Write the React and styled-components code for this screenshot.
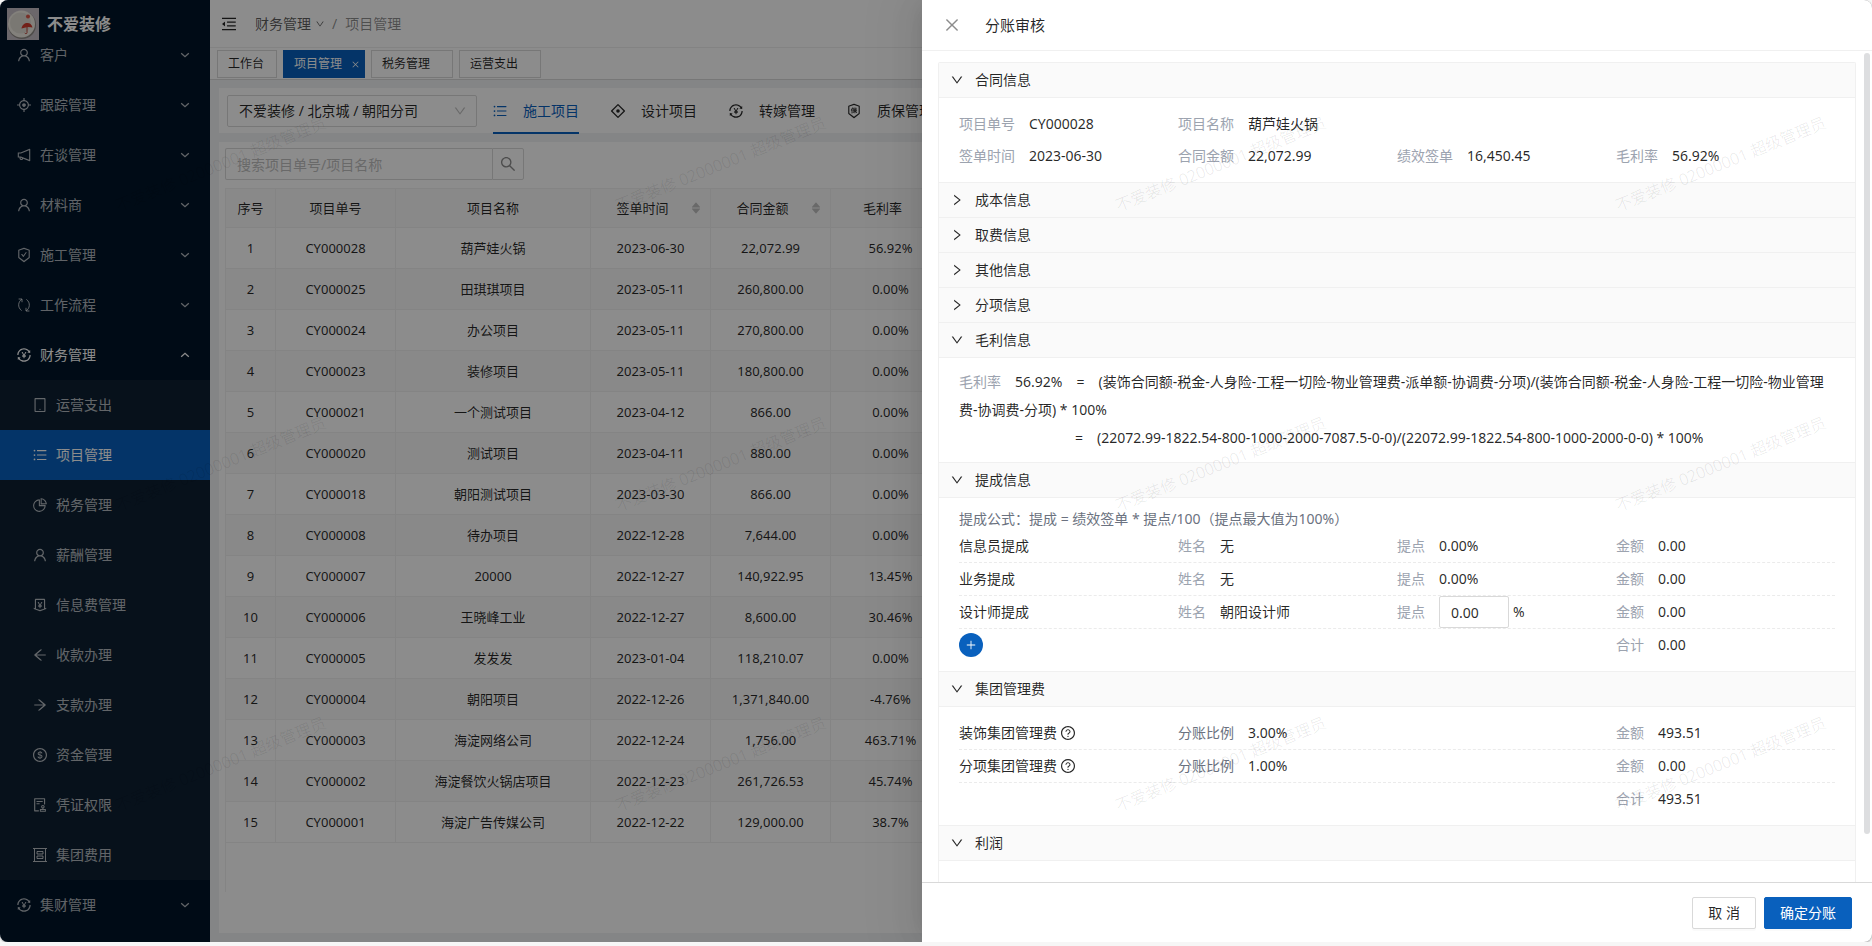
import React, { useState } from "react";
import styled, { createGlobalStyle, css } from "styled-components";
import {
  AiOutlineUser,
  AiOutlineAim,
  AiOutlineNotification,
  AiOutlineSafetyCertificate,
  AiOutlineTransaction,
  AiOutlineTablet,
  AiOutlineUnorderedList,
  AiOutlinePieChart,
  AiOutlineMoneyCollect,
  AiOutlineArrowLeft,
  AiOutlineArrowRight,
  AiOutlineDollar,
  AiOutlineAudit,
  AiOutlineInsurance,
  AiOutlineMenuFold,
  AiOutlineDown,
  AiOutlineRight,
  AiOutlineSearch,
  AiOutlineClose,
  AiOutlinePlus,
  AiOutlineQuestionCircle,
  AiFillCaretUp,
  AiFillCaretDown,
} from "react-icons/ai";

const primary = "#0960bd";
const line = "#f0f0f0";
const controlLine = "#d9d9d9";
const ink = "rgba(0, 0, 0, 0.85)";
const gray = "#9ca3af";
const grayDark = "#6b7280";

const GlobalStyle = createGlobalStyle`
  * { box-sizing: border-box; }
  body {
    margin: 0;
    background: #f6f6f6;
    color: ${ink};
    font-family: "Noto Sans", "Noto Sans CJK SC", sans-serif;
    font-size: 14px;
    line-height: 22px;
  }
  button, input, select { font: inherit; color: inherit; }
  button { padding: 0; border: 0; background: none; cursor: pointer; }
  a { color: inherit; text-decoration: none; }
  svg { display: block; flex: none; }
`;

/* The icon set keeps an empty rim inside its view box; the drawing is
   enlarged past its slot by that rim so the strokes fill the slot. */
const IconSlot = styled.span`
  flex: none;
  display: grid;
  place-items: center;
  place-content: center;
  width: ${(p) => p.$size}px;
  height: ${(p) => p.$size}px;
`;

function Icon({ of: Drawing, size = 14 }) {
  return (
    <IconSlot $size={size}>
      <Drawing size={size > 9 ? size + 2 : size + 1} />
    </IconSlot>
  );
}

const Window = styled.div`
  position: relative;
  display: flex;
  height: calc(100vh - 4px);
  border-radius: 8px;
  overflow: hidden;
  background: #f0f2f5;
  box-shadow: 0 1px 2px rgba(0, 0, 0, 0.3);
`;

/* ---------- sidebar ---------- */

const Sider = styled.aside`
  flex: none;
  display: flex;
  flex-direction: column;
  width: 210px;
  background: #001529;
  color: rgba(255, 255, 255, 0.7);
`;

const Brand = styled.a`
  flex: none;
  display: flex;
  align-items: center;
  gap: 8px;
  height: 48px;
  padding-left: 7px;
  color: #fff;
  font-size: 16px;
  font-weight: 700;
`;

const MenuViewport = styled.nav`
  flex: 1;
  min-height: 0;
  overflow: hidden;
`;

const Menu = styled.ul`
  margin: 0;
  margin-top: ${(p) => (p.$scrolled ? "-18px" : "0")};
  padding: 0;
  list-style: none;
  background: ${(p) => (p.$sub ? "#0e2032" : "transparent")};
`;

const MenuLink = styled.a`
  display: flex;
  align-items: center;
  gap: 9px;
  height: 50px;
  padding: 0 20px 0 ${(p) => (p.$sub ? "33px" : "17px")};
  line-height: 14px;
  ${(p) => p.$open && css`color: #fff;`}
  ${(p) =>
    p.$active &&
    css`
      color: #fff;
      background: ${primary};
    `}
`;

const MenuText = styled.span`
  flex: 1;
`;

function Chevron({ up }) {
  return (
    <svg width="10" height="10" viewBox="0 0 10 10" fill="none" stroke="currentColor" strokeWidth="1.3">
      <path d={up ? "M1.200 6.800L5 3.300l3.800 3.500" : "M1.200 3.200L5 6.700l3.800-3.500"} />
    </svg>
  );
}

function FlowIcon({ size }) {
  return (
    <svg width={size} height={size} viewBox="-1 -1 16 16" fill="none" stroke="currentColor" strokeWidth="1">
      <path d="M4.600 12.600C2.400 11 1.500 8.700 1.700 6.400 1.900 4.300 3 2.400 4.800 1.200M1.600 1h3.400v3.200" />
      <path d="M9.400 1.400c2.200 1.600 3.100 3.900 2.900 6.200-.2 2.100-1.300 4-3.100 5.200M12.400 13H9V9.800" />
    </svg>
  );
}

function CabinetIcon({ size }) {
  return (
    <svg width={size} height={size} viewBox="-1 -1 16 16" fill="none" stroke="currentColor" strokeWidth="1">
      <path d="M1.500 1v12M12.500 1v12M0 .500h14M0 13.500h14" />
      <path d="M4 3.500h6v2.500H4zM4 8h6v2.500H4z" />
    </svg>
  );
}

function DiamondIcon({ size }) {
  return (
    <svg width={size} height={size} viewBox="-1 -1 16 16" fill="none" stroke="currentColor" strokeWidth="1.300">
      <path d="M7 .6L13.400 7 7 13.400 .6 7z" strokeLinejoin="round" />
      <circle cx="7" cy="7" r="1.800" fill="currentColor" stroke="none" />
    </svg>
  );
}

function BrandMark() {
  return (
    <svg width="32" height="32" viewBox="0 0 32 32" aria-hidden="true">
      <rect width="32" height="32" fill="#c3bcc4" />
      <circle cx="15" cy="17" r="14" fill="#8f8a86" />
      <circle cx="14.500" cy="16" r="13.500" fill="#efebe2" />
      <circle cx="13.500" cy="15" r="10.500" fill="#dedad2" />
      <circle cx="21" cy="8.500" r="2" fill="#d9594a" />
      <path d="M14.500 20.500c.5-3.500 3-5.500 6-5.500 2.500 0 4.500 1.800 5 4.500l-3.700-.6-3.300.5z" fill="#d23b2c" />
      <path d="M20 18.500v6.300c0 1.200-2 1.200-2.200 0" fill="none" stroke="#b9483c" strokeWidth="1" />
    </svg>
  );
}

const menuTop = [
  ["客户", AiOutlineUser],
  ["跟踪管理", AiOutlineAim],
  ["在谈管理", AiOutlineNotification],
  ["材料商", AiOutlineUser],
  ["施工管理", AiOutlineSafetyCertificate],
  ["工作流程", FlowIcon],
];

const menuFinance = [
  ["运营支出", AiOutlineTablet],
  ["项目管理", AiOutlineUnorderedList],
  ["税务管理", AiOutlinePieChart],
  ["薪酬管理", AiOutlineUser],
  ["信息费管理", AiOutlineMoneyCollect],
  ["收款办理", AiOutlineArrowLeft],
  ["支款办理", AiOutlineArrowRight],
  ["资金管理", AiOutlineDollar],
  ["凭证权限", AiOutlineAudit],
  ["集团费用", CabinetIcon],
];

function MenuEntry({ label, icon, sub, open, active, children }) {
  return (
    <li>
      <MenuLink href="#" $sub={sub} $open={open} $active={active}>
        <Icon of={icon} />
        <MenuText>{label}</MenuText>
        {!sub && <Chevron up={open} />}
      </MenuLink>
      {children}
    </li>
  );
}

function Sidebar() {
  return (
    <Sider>
      <Brand href="#">
        <BrandMark />
        不爱装修
      </Brand>
      <MenuViewport>
        <Menu $scrolled>
          {menuTop.map(([label, icon]) => (
            <MenuEntry key={label} label={label} icon={icon} />
          ))}
          <MenuEntry label="财务管理" icon={AiOutlineTransaction} open>
            <Menu $sub>
              {menuFinance.map(([label, icon]) => (
                <MenuEntry key={label} label={label} icon={icon} sub active={label === "项目管理"} />
              ))}
            </Menu>
          </MenuEntry>
          <MenuEntry label="集财管理" icon={AiOutlineTransaction} />
        </Menu>
      </MenuViewport>
    </Sider>
  );
}

/* ---------- page ---------- */

const Main = styled.div`
  flex: 1;
  min-width: 0;
  display: flex;
  flex-direction: column;
`;

const TopBar = styled.header`
  flex: none;
  display: flex;
  align-items: center;
  gap: 18px;
  height: 48px;
  padding: 0 11px;
  border-bottom: 1px solid #eee;
  background: #fff;
`;

const Breadcrumb = styled.nav`
  display: flex;
  align-items: center;
  gap: 8px;
  color: rgba(0, 0, 0, 0.45);
`;

const Crumb = styled.a`
  display: flex;
  align-items: center;
  gap: 4px;
  color: ${(p) => (p.$current ? "rgba(0, 0, 0, 0.45)" : "rgba(0, 0, 0, 0.65)")};
`;

const PageTabs = styled.div`
  flex: none;
  display: flex;
  align-items: flex-end;
  gap: 6px;
  height: 32px;
  padding: 0 7px 1px;
  border-bottom: 1px solid ${controlLine};
  background: #fff;
`;

const PageTab = styled.button`
  display: flex;
  align-items: center;
  justify-content: space-between;
  width: ${(p) => (p.$home ? "60px" : "82px")};
  height: 28px;
  padding: 0 5px 0 10px;
  border: 1px solid ${(p) => (p.$active ? primary : controlLine)};
  background: ${(p) => (p.$active ? primary : "#fff")};
  color: ${(p) => (p.$active ? "#fff" : ink)};
  font-size: 12px;
`;

const Content = styled.main`
  flex: 1;
  min-height: 0;
  display: flex;
  flex-direction: column;
  gap: 9px;
  padding: 8px 9px 9px;
`;

const FilterCard = styled.section`
  flex: none;
  display: flex;
  align-items: center;
  gap: 16px;
  height: 45px;
  padding: 0 8px;
  background: #fff;
`;

const SelectBox = styled.label`
  position: relative;
  flex: none;
  width: 250px;
`;

const SelectArrow = styled.span`
  position: absolute;
  right: 11px;
  top: 10px;
  color: rgba(0, 0, 0, 0.25);
  pointer-events: none;
`;

const Select = styled.select`
  display: block;
  width: 100%;
  height: 32px;
  padding: 0 32px 0 11px;
  border: 1px solid ${controlLine};
  border-radius: 2px;
  background: #fff;
  appearance: none;
`;

const KindTabs = styled.div`
  align-self: flex-start;
  display: flex;
  gap: 32px;
`;

const KindTab = styled.button`
  flex: none;
  display: flex;
  align-items: center;
  gap: 16px;
  height: 46px;
  padding-top: 2px;
  border-bottom: 2px solid ${(p) => (p.$active ? primary : "transparent")};
  color: ${(p) => (p.$active ? primary : ink)};
  white-space: nowrap;
`;

const TableCard = styled.section`
  flex: 1;
  min-height: 0;
  padding: 6px 6px 41px;
  display: flex;
  flex-direction: column;
  gap: 8px;
  background: #fff;
`;

const SearchBox = styled.form`
  flex: none;
  display: flex;
`;

const SearchInput = styled.input`
  width: 267px;
  height: 32px;
  padding: 0 11px;
  border: 1px solid ${controlLine};
  border-right: 0;
  border-radius: 2px 0 0 2px;
  background: #fff;
  &::placeholder { color: #bfbfbf; }
`;

const SearchButton = styled.button`
  display: grid;
  place-items: center;
  width: 32px;
  height: 32px;
  border: 1px solid ${controlLine};
  border-radius: 0 2px 2px 0;
  color: rgba(0, 0, 0, 0.45);
`;

const TableFrame = styled.div`
  flex: 1;
  min-height: 0;
  overflow: hidden;
  border-top: 1px solid ${line};
  border-left: 1px solid ${line};
`;

const Table = styled.table`
  width: 725px;
  table-layout: fixed;
  border-collapse: separate;
  border-spacing: 0;
  font-size: 13px;
  text-align: center;

  th, td {
    padding: 0 8px;
    border-right: 1px solid ${line};
    border-bottom: 1px solid ${line};
    font-weight: 400;
    white-space: nowrap;
  }
  th { height: 39px; background: #fafafa; }
  td { height: 41px; }
  tbody tr:nth-child(even) td { background: #fafafa; }
`;

const SortHead = styled.button`
  display: flex;
  align-items: center;
  gap: 4px;
  width: 100%;
`;

const SortLabel = styled.span`
  flex: 1;
`;

const SortArrows = styled.span`
  display: flex;
  flex-direction: column;
  color: #bfbfbf;
  svg + svg { margin-top: -6px; }
`;

const columns = [
  ["序号", 50],
  ["项目单号", 120],
  ["项目名称", 195],
  ["签单时间", 120, true],
  ["合同金额", 120, true],
  ["毛利率", 120, true],
];

const projects = [
  ["CY000028", "葫芦娃火锅", "2023-06-30", "22,072.99", "56.92%"],
  ["CY000025", "田琪琪项目", "2023-05-11", "260,800.00", "0.00%"],
  ["CY000024", "办公项目", "2023-05-11", "270,800.00", "0.00%"],
  ["CY000023", "装修项目", "2023-05-11", "180,800.00", "0.00%"],
  ["CY000021", "一个测试项目", "2023-04-12", "866.00", "0.00%"],
  ["CY000020", "测试项目", "2023-04-11", "880.00", "0.00%"],
  ["CY000018", "朝阳测试项目", "2023-03-30", "866.00", "0.00%"],
  ["CY000008", "待办项目", "2022-12-28", "7,644.00", "0.00%"],
  ["CY000007", "20000", "2022-12-27", "140,922.95", "13.45%"],
  ["CY000006", "王晓峰工业", "2022-12-27", "8,600.00", "30.46%"],
  ["CY000005", "发发发", "2023-01-04", "118,210.07", "0.00%"],
  ["CY000004", "朝阳项目", "2022-12-26", "1,371,840.00", "-4.76%"],
  ["CY000003", "海淀网络公司", "2022-12-24", "1,756.00", "463.71%"],
  ["CY000002", "海淀餐饮火锅店项目", "2022-12-23", "261,726.53", "45.74%"],
  ["CY000001", "海淀广告传媒公司", "2022-12-22", "129,000.00", "38.7%"],
];

function ProjectTable() {
  return (
    <TableFrame>
      <Table>
        <colgroup>
          {columns.map(([name, width]) => (
            <col key={name} width={width} />
          ))}
        </colgroup>
        <thead>
          <tr>
            {columns.map(([name, , sortable]) => (
              <th key={name} scope="col">
                {sortable ? (
                  <SortHead type="button">
                    <SortLabel>{name}</SortLabel>
                    <SortArrows>
                      <AiFillCaretUp size={12} />
                      <AiFillCaretDown size={12} />
                    </SortArrows>
                  </SortHead>
                ) : (
                  name
                )}
              </th>
            ))}
          </tr>
        </thead>
        <tbody>
          {projects.map((row, i) => (
            <tr key={row[0]}>
              <td>{i + 1}</td>
              {row.map((cell, j) => (
                <td key={j}>{cell}</td>
              ))}
            </tr>
          ))}
        </tbody>
      </Table>
    </TableFrame>
  );
}

function ProjectPage() {
  return (
    <Main>
      <TopBar>
        <button type="button" aria-label="收起菜单">
          <Icon of={AiOutlineMenuFold} size={16} />
        </button>
        <Breadcrumb>
          <Crumb href="#">
            财务管理
            <Icon of={AiOutlineDown} size={9} />
          </Crumb>
          /
          <Crumb href="#" $current>
            项目管理
          </Crumb>
        </Breadcrumb>
      </TopBar>
      <PageTabs>
        <PageTab type="button" $home>工作台</PageTab>
        <PageTab type="button" $active>
          项目管理
          <Icon of={AiOutlineClose} size={8} />
        </PageTab>
        <PageTab type="button">税务管理</PageTab>
        <PageTab type="button">运营支出</PageTab>
      </PageTabs>
      <Content>
        <FilterCard>
          <SelectBox>
            <Select aria-label="所属公司">
              <option>不爱装修 / 北京城 / 朝阳分司</option>
            </Select>
            <SelectArrow>
              <Icon of={AiOutlineDown} size={12} />
            </SelectArrow>
          </SelectBox>
          <KindTabs>
            <KindTab type="button" $active>
              <Icon of={AiOutlineUnorderedList} />
              施工项目
            </KindTab>
            <KindTab type="button">
              <Icon of={DiamondIcon} />
              设计项目
            </KindTab>
            <KindTab type="button">
              <Icon of={AiOutlineTransaction} />
              转嫁管理
            </KindTab>
            <KindTab type="button">
              <Icon of={AiOutlineInsurance} />
              质保管理
            </KindTab>
          </KindTabs>
        </FilterCard>
        <TableCard>
          <SearchBox>
            <SearchInput aria-label="搜索项目" placeholder="搜索项目单号/项目名称" />
            <SearchButton type="button" aria-label="搜索">
              <Icon of={AiOutlineSearch} size={16} />
            </SearchButton>
          </SearchBox>
          <ProjectTable />
        </TableCard>
      </Content>
    </Main>
  );
}

/* ---------- drawer ---------- */

const Mask = styled.div`
  position: absolute;
  inset: 0;
  display: flex;
  justify-content: flex-end;
  background: rgba(0, 0, 0, 0.45);
`;

const DrawerPanel = styled.section`
  display: flex;
  flex-direction: column;
  width: 950px;
  background: #fff;
  box-shadow: -6px 0 16px -8px rgba(0, 0, 0, 0.08), -9px 0 28px rgba(0, 0, 0, 0.05),
    -12px 0 48px 16px rgba(0, 0, 0, 0.03);
`;

const DrawerHeader = styled.header`
  flex: none;
  display: flex;
  align-items: center;
  gap: 25px;
  height: 51px;
  padding: 0 22px;
  border-bottom: 1px solid ${line};
`;

const CloseButton = styled.button`
  color: rgba(0, 0, 0, 0.45);
`;

const DrawerTitle = styled.h2`
  margin: 0;
  font-size: 15px;
  font-weight: 400;
`;

const DrawerBody = styled.div`
  position: relative;
  flex: 1;
  min-height: 0;
  overflow: hidden;
  padding: 11px 16px 0;
`;

const ScrollThumb = styled.span`
  position: absolute;
  top: 2px;
  right: 2px;
  width: 6px;
  height: 94%;
  border-radius: 3px;
  background: #dddee0;
`;

const Collapse = styled.div`
  border: 1px solid ${line};
  border-bottom: 0;
  border-radius: 2px;
`;

const PanelBox = styled.section`
  border-bottom: 1px solid ${line};
`;

const PanelHeader = styled.button`
  display: flex;
  align-items: center;
  gap: 12px;
  width: 100%;
  height: 34px;
  padding: 0 12px;
  background: #fafafa;
`;

const PanelContent = styled.div`
  min-height: 60px;
  padding: 10px 20px;
  border-top: 1px solid ${line};
`;

const FieldRow = styled.div`
  display: grid;
  grid-template-columns: repeat(4, 1fr);
  align-items: center;
  min-height: ${(p) => (p.$ruled ? "33px" : "32px")};
  ${(p) => p.$ruled && css`border-bottom: 1px dashed #ebebeb;`}
`;

const FieldBox = styled.div`
  display: flex;
  align-items: center;
  grid-column: ${(p) => p.$column || "auto"};
`;

const FieldLabel = styled.span`
  margin-right: 14px;
  color: ${(p) => (p.$dark ? grayDark : gray)};
`;

const RowName = styled.div`
  display: flex;
  align-items: center;
  gap: 4px;
`;

const Formula = styled.p`
  margin: 0;
  line-height: 28px;
`;

const Equals = styled.span`
  margin: 0 14px;
`;

const SecondEquals = styled(Equals)`
  margin-left: 116px;
`;

const Hint = styled.p`
  margin: 0;
  color: ${grayDark};
`;

const RateLabel = styled.label`
  margin-right: 14px;
  color: ${gray};
`;

const RateInput = styled.input`
  width: 70px;
  height: 32px;
  margin-right: 4px;
  padding: 0 11px;
  border: 1px solid ${controlLine};
  border-radius: 2px;
  background: #fff;
`;

const AddButton = styled.button`
  display: grid;
  place-items: center;
  width: 24px;
  height: 24px;
  border-radius: 50%;
  background: ${primary};
  color: #fff;
`;

const DrawerFooter = styled.footer`
  flex: none;
  display: flex;
  align-items: center;
  justify-content: flex-end;
  gap: 8px;
  height: 60px;
  padding: 0 20px;
  border-top: 1px solid ${controlLine};
`;

const FooterButton = styled.button`
  height: 32px;
  padding: 0 15px;
  border: 1px solid ${(p) => (p.$primary ? primary : controlLine)};
  border-radius: 2px;
  background: ${(p) => (p.$primary ? primary : "#fff")};
  color: ${(p) => (p.$primary ? "#fff" : ink)};
  box-shadow: 0 2px 0 rgba(0, 0, 0, 0.02);
`;

function Panel({ title, defaultOpen, children }) {
  const [open, setOpen] = useState(Boolean(defaultOpen));
  return (
    <PanelBox>
      <PanelHeader type="button" aria-expanded={open} onClick={() => setOpen(!open)}>
        <Icon of={open ? AiOutlineDown : AiOutlineRight} size={12} />
        {title}
      </PanelHeader>
      {open && <PanelContent>{children}</PanelContent>}
    </PanelBox>
  );
}

function Field({ label, value, column, dark }) {
  return (
    <FieldBox $column={column}>
      <FieldLabel $dark={dark}>{label}</FieldLabel>
      {value}
    </FieldBox>
  );
}

function ReviewDrawer() {
  return (
    <Mask>
      <DrawerPanel role="dialog" aria-labelledby="drawer-title">
        <DrawerHeader>
          <CloseButton type="button" aria-label="关闭">
            <Icon of={AiOutlineClose} size={16} />
          </CloseButton>
          <DrawerTitle id="drawer-title">分账审核</DrawerTitle>
        </DrawerHeader>
        <DrawerBody>
          <Collapse>
            <Panel title="合同信息" defaultOpen>
              <FieldRow>
                <Field label="项目单号" value="CY000028" />
                <Field label="项目名称" value="葫芦娃火锅" />
              </FieldRow>
              <FieldRow>
                <Field label="签单时间" value="2023-06-30" />
                <Field label="合同金额" value="22,072.99" />
                <Field label="绩效签单" value="16,450.45" />
                <Field label="毛利率" value="56.92%" />
              </FieldRow>
            </Panel>
            <Panel title="成本信息" />
            <Panel title="取费信息" />
            <Panel title="其他信息" />
            <Panel title="分项信息" />
            <Panel title="毛利信息" defaultOpen>
              <Formula>
                <FieldLabel>毛利率</FieldLabel>
                56.92%
                <Equals>=</Equals>
                (装饰合同额-税金-人身险-工程一切险-物业管理费-派单额-协调费-分项)/(装饰合同额-税金-人身险-工程一切险-物业管理费-协调费-分项) * 100%
              </Formula>
              <Formula>
                <SecondEquals>=</SecondEquals>
                (22072.99-1822.54-800-1000-2000-7087.5-0-0)/(22072.99-1822.54-800-1000-2000-0-0) * 100%
              </Formula>
            </Panel>
            <Panel title="提成信息" defaultOpen>
              <Hint>提成公式：提成 = 绩效签单 * 提点/100（提点最大值为100%）</Hint>
              <FieldRow $ruled>
                <RowName>信息员提成</RowName>
                <Field label="姓名" value="无" />
                <Field label="提点" value="0.00%" />
                <Field label="金额" value="0.00" />
              </FieldRow>
              <FieldRow $ruled>
                <RowName>业务提成</RowName>
                <Field label="姓名" value="无" />
                <Field label="提点" value="0.00%" />
                <Field label="金额" value="0.00" />
              </FieldRow>
              <FieldRow $ruled>
                <RowName>设计师提成</RowName>
                <Field label="姓名" value="朝阳设计师" />
                <FieldBox>
                  <RateLabel htmlFor="designer-rate">提点</RateLabel>
                  <RateInput id="designer-rate" defaultValue="0.00" />%
                </FieldBox>
                <Field label="金额" value="0.00" />
              </FieldRow>
              <FieldRow>
                <AddButton type="button" aria-label="添加提成">
                  <Icon of={AiOutlinePlus} size={10} />
                </AddButton>
                <Field label="合计" value="0.00" column={4} />
              </FieldRow>
            </Panel>
            <Panel title="集团管理费" defaultOpen>
              <FieldRow $ruled>
                <RowName>
                  装饰集团管理费
                  <Icon of={AiOutlineQuestionCircle} />
                </RowName>
                <Field label="分账比例" value="3.00%" dark />
                <Field label="金额" value="493.51" column={4} />
              </FieldRow>
              <FieldRow $ruled>
                <RowName>
                  分项集团管理费
                  <Icon of={AiOutlineQuestionCircle} />
                </RowName>
                <Field label="分账比例" value="1.00%" dark />
                <Field label="金额" value="0.00" column={4} />
              </FieldRow>
              <FieldRow>
                <Field label="合计" value="493.51" column={4} />
              </FieldRow>
            </Panel>
            <Panel title="利润" defaultOpen />
          </Collapse>
          <ScrollThumb />
        </DrawerBody>
        <DrawerFooter>
          <FooterButton type="button">取 消</FooterButton>
          <FooterButton type="button" $primary>确定分账</FooterButton>
        </DrawerFooter>
      </DrawerPanel>
    </Mask>
  );
}

/* ---------- watermark ---------- */

const WatermarkLayer = styled.div`
  position: absolute;
  inset: 0;
  display: grid;
  grid-template-columns: repeat(4, 500px);
  grid-auto-rows: 300px;
  overflow: hidden;
  pointer-events: none;
`;

const WatermarkCell = styled.div`
  display: grid;
  place-items: center;
  padding: 28px 58px 0 0;
`;

const WatermarkText = styled.span`
  color: rgba(0, 0, 0, 0.1);
  font-size: 16px;
  font-weight: 300;
  white-space: nowrap;
  transform: rotate(-22deg);
`;

function Watermark() {
  return (
    <WatermarkLayer aria-hidden="true">
      {Array.from({ length: 12 }, (_, i) => (
        <WatermarkCell key={i}>
          <WatermarkText>不爱装修 02000001 超级管理员</WatermarkText>
        </WatermarkCell>
      ))}
    </WatermarkLayer>
  );
}

export default function App() {
  return (
    <>
      <GlobalStyle />
      <Window>
        <Sidebar />
        <ProjectPage />
        <ReviewDrawer />
        <Watermark />
      </Window>
    </>
  );
}
